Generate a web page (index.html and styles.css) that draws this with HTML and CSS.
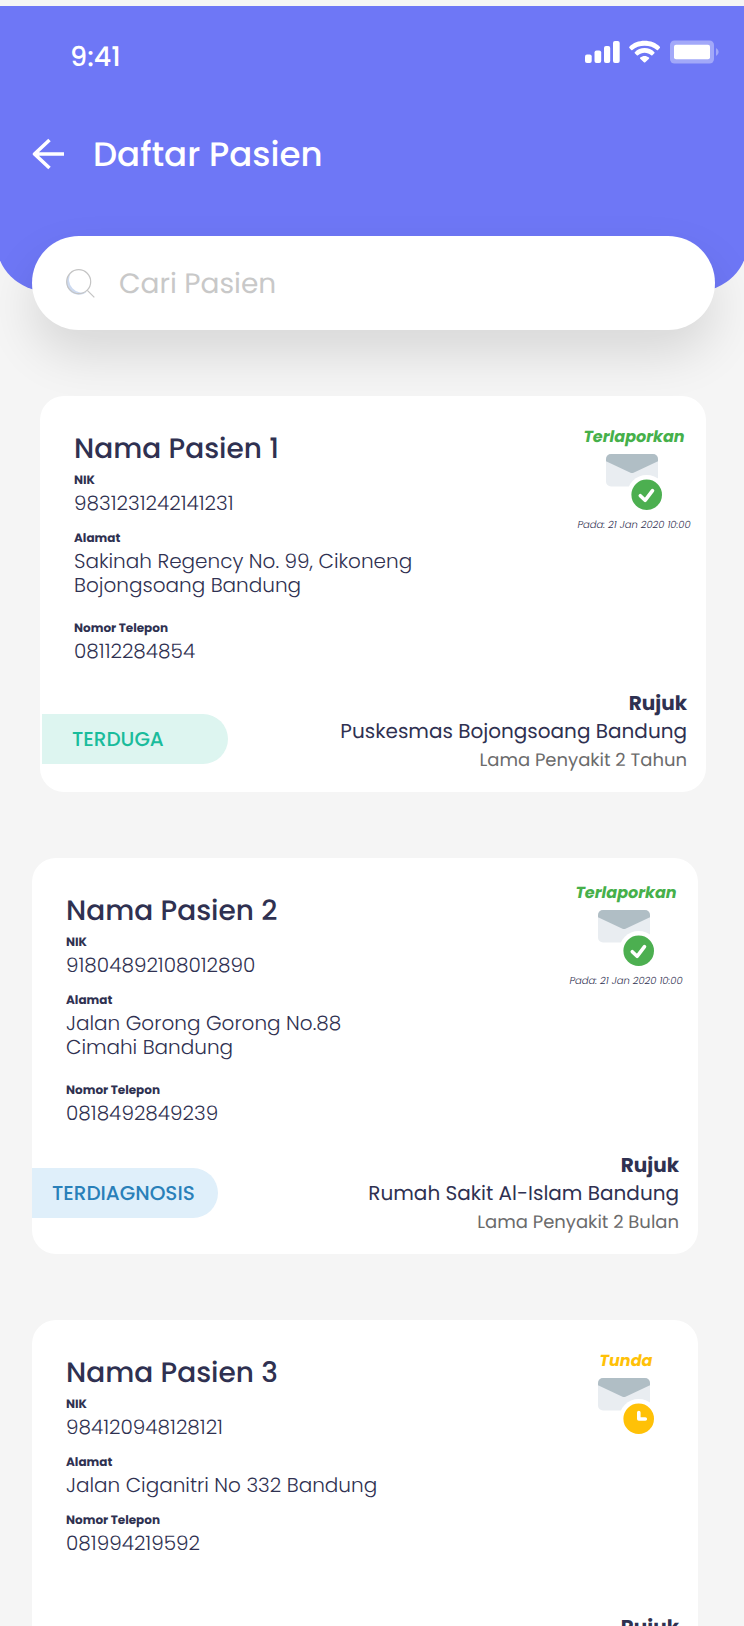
FILE: index.html
```html
<!DOCTYPE html>
<html lang="id">
<head>
<meta charset="utf-8">
<meta name="viewport" content="width=device-width, initial-scale=1">
<title>Daftar Pasien</title>
<link rel="stylesheet" href="styles.css">
</head>
<body>
<svg class="sprite" aria-hidden="true">
  <symbol id="envelope" viewBox="0 0 56 56">
    <rect width="52" height="32.500" rx="5" fill="#e9edf1"/>
    <path d="M0 7.200V5a5 5 0 0 1 5-5h42a5 5 0 0 1 5 5v2.200L27.500 18.700q-1.500.7-3 0z" fill="#b0bec5"/>
    <circle cx="40.700" cy="40.700" r="19.600" fill="#fff"/>
  </symbol>
  <symbol id="mail-sent" viewBox="0 0 56 56">
    <use href="#envelope" width="56" height="56"/>
    <circle cx="40.700" cy="40.700" r="15.300" fill="#4caf50"/>
    <path d="M34.300 41.700l4.800 4.600 7.400-9.600" fill="none" stroke="#fff" stroke-width="3.600" stroke-linecap="round" stroke-linejoin="round"/>
  </symbol>
  <symbol id="mail-pending" viewBox="0 0 56 56">
    <use href="#envelope" width="56" height="56"/>
    <circle cx="40.700" cy="40.700" r="15.300" fill="#ffc107"/>
    <path d="M40.800 34.500v6.500h6.500" fill="none" stroke="#fff" stroke-width="3.600" stroke-linecap="round" stroke-linejoin="round"/>
  </symbol>
</svg>
<div class="screen">
  <header class="header">
    <div class="statusbar">
      <span class="clock">9:41</span>
      <svg class="indicators" viewBox="0 0 135 24" aria-hidden="true">
        <g fill="#fff">
          <rect x="0" y="14.500" width="6.700" height="8.500" rx="2"/>
          <rect x="9.500" y="10.500" width="6.700" height="12.500" rx="2"/>
          <rect x="19" y="6" width="6.200" height="17" rx="2"/>
          <rect x="28" y="1" width="6.700" height="22" rx="2"/>
          <path d="M44.400 6.800C51.500-1.200 67.700-1.200 74.800 6.800q.5.600 0 1.200l-1.800 1.900q-.6.600-1.200 0C66 4.200 53.200 4.200 47.400 9.900q-.6.600-1.200 0L44.400 8q-.5-.6 0-1.200z"/>
          <path d="M49.800 12.200c5-5.600 14.600-5.600 19.600 0q.5.500 0 1.100l-2 2q-.6.500-1.200 0c-3.600-3.400-9.600-3.400-13.200 0q-.6.500-1.200 0l-2-2q-.5-.6 0-1.100z"/>
          <path d="M55.200 17.600c2.600-2.200 6.200-2.200 8.800 0q.6.500 0 1.200L60.300 22.300q-.7.600-1.400 0L55.200 18.800q-.6-.7 0-1.200z"/>
          <rect x="89" y="4.700" width="36" height="14.600" rx="2"/>
          <g fill-opacity=".36">
            <path d="M89.500.5h35a4.500 4.500 0 0 1 4.500 4.500v14a4.500 4.500 0 0 1-4.500 4.500h-35A4.500 4.500 0 0 1 85 19V5A4.500 4.500 0 0 1 89.500.5z"/>
            <path d="M131 8q2.700 1.500 2.700 4t-2.700 4z"/>
          </g>
        </g>
      </svg>
    </div>
    <div class="titlebar">
      <button class="back" type="button" aria-label="Kembali">
        <svg viewBox="0 0 32 32" aria-hidden="true"><path d="M32 16H2M17.500 2L2.500 16l15 14" fill="none" stroke="#fff" stroke-width="3.600" stroke-linejoin="round"/></svg>
      </button>
      <h1 class="title">Daftar Pasien</h1>
    </div>
  </header>

  <form class="search" role="search">
    <label class="search-icon" for="q" aria-label="Cari Pasien">
      <svg viewBox="0 0 29 29" aria-hidden="true">
        <path d="M4.500 4.500A12 12 0 0 0 21 22.500 13 13 0 0 1 4.500 4.500z" fill="#cddaf0"/>
        <circle cx="12.700" cy="12.700" r="12" fill="none" stroke="#c4c4c4" stroke-width="1.200"/>
        <path d="M21.300 21.300l7 7" stroke="#c4c4c4" stroke-width="1.200"/>
      </svg>
    </label>
    <input class="search-input" id="q" type="text" placeholder="Cari Pasien">
  </form>

  <main class="list">
    <article class="card card-active">
      <div class="card-body">
        <div class="info">
          <h2 class="name">Nama Pasien 1</h2>
          <dl class="fields">
            <div><dt>NIK</dt><dd>9831231242141231</dd></div>
            <div class="two-line"><dt>Alamat</dt><dd>Sakinah Regency No. 99, Cikoneng<br>Bojongsoang Bandung</dd></div>
            <div><dt>Nomor Telepon</dt><dd>08112284854</dd></div>
          </dl>
        </div>
        <div class="report sent">
          <strong class="report-label">Terlaporkan</strong>
          <svg class="report-icon" aria-hidden="true"><use href="#mail-sent"/></svg>
          <time class="report-date">Pada: 21 Jan 2020 10:00</time>
        </div>
      </div>
      <footer class="card-foot">
        <span class="tag suspect">TERDUGA</span>
        <div class="referral">
          <strong class="referral-title">Rujuk</strong>
          <span class="place">Puskesmas Bojongsoang Bandung</span>
          <span class="duration">Lama Penyakit 2 Tahun</span>
        </div>
      </footer>
    </article>

    <article class="card">
      <div class="card-body">
        <div class="info">
          <h2 class="name">Nama Pasien 2</h2>
          <dl class="fields">
            <div><dt>NIK</dt><dd>91804892108012890</dd></div>
            <div class="two-line"><dt>Alamat</dt><dd>Jalan Gorong Gorong No.88<br>Cimahi Bandung</dd></div>
            <div><dt>Nomor Telepon</dt><dd>0818492849239</dd></div>
          </dl>
        </div>
        <div class="report sent raised">
          <strong class="report-label">Terlaporkan</strong>
          <svg class="report-icon" aria-hidden="true"><use href="#mail-sent"/></svg>
          <time class="report-date">Pada: 21 Jan 2020 10:00</time>
        </div>
      </div>
      <footer class="card-foot">
        <span class="tag diagnosed">TERDIAGNOSIS</span>
        <div class="referral">
          <strong class="referral-title">Rujuk</strong>
          <span class="place">Rumah Sakit Al-Islam Bandung</span>
          <span class="duration">Lama Penyakit 2 Bulan</span>
        </div>
      </footer>
    </article>

    <article class="card">
      <div class="card-body">
        <div class="info">
          <h2 class="name">Nama Pasien 3</h2>
          <dl class="fields">
            <div><dt>NIK</dt><dd>984120948128121</dd></div>
            <div><dt>Alamat</dt><dd>Jalan Ciganitri No 332 Bandung</dd></div>
            <div><dt>Nomor Telepon</dt><dd>081994219592</dd></div>
          </dl>
        </div>
        <div class="report pending">
          <strong class="report-label">Tunda</strong>
          <svg class="report-icon" aria-hidden="true"><use href="#mail-pending"/></svg>
        </div>
      </div>
      <footer class="card-foot">
        <div class="referral">
          <strong class="referral-title">Rujuk</strong>
        </div>
      </footer>
    </article>
  </main>
</div>
</body>
</html>
```
FILE: styles.css
```css
* {
  box-sizing: border-box;
}

body {
  margin: 0;
  background: #f5f5f5;
  color: #2f3151;
  font-family: Poppins, Inter, "Open Sans", sans-serif;
  text-rendering: geometricPrecision;
}

h1,
h2,
dl,
dd {
  margin: 0;
}

.sprite {
  display: none;
}

.screen {
  display: flex;
  flex-direction: column;
  height: 100vh;
  padding-top: 6px;
  overflow: hidden;
}

/* Header */
.header {
  flex: none;
  min-height: 285px;
  margin: 0 -4px;
  padding: 32px 28px 0 36px;
  border-radius: 0 0 50px 50px;
  background: #6e77f6;
  color: #fff;
}

.statusbar {
  display: flex;
  justify-content: space-between;
  align-items: flex-start;
  padding-left: 38px;
}

.clock {
  font-size: 27px;
  line-height: 40px;
  font-weight: 500;
}

.indicators {
  width: 135px;
  height: 24px;
  margin-top: 2px;
}

.titlebar {
  display: flex;
  align-items: center;
  gap: 29px;
  margin-top: 51px;
}

.back {
  width: 32px;
  height: 32px;
  padding: 0;
  border: 0;
  background: none;
}

.back svg {
  display: block;
}

.title {
  font-size: 34px;
  line-height: 50px;
  font-weight: 500;
}

/* Search */
.search {
  position: relative;
  flex: none;
  display: flex;
  align-items: center;
  gap: 24px;
  height: 94px;
  margin: -55px 29px 0 32px;
  padding: 0 34px;
  border-radius: 47px;
  background: #fff;
  box-shadow: 0 24px 50px rgba(0, 0, 0, .12);
}

.search-icon svg {
  display: block;
  width: 29px;
  height: 29px;
}

.search-input {
  flex: 1;
  min-width: 0;
  padding: 2px 0 0;
  border: 0;
  outline: 0;
  background: none;
  color: #2f3151;
  font: 400 28px/40px Poppins, Inter, "Open Sans", sans-serif;
  text-rendering: geometricPrecision;
}

.search-input::placeholder {
  color: #c8c8c8;
  opacity: 1;
}

/* Patient cards */
.list {
  position: relative;
  flex: none;
  display: flex;
  flex-direction: column;
  gap: 66px;
  padding: 66px 46px 66px 32px;
}

.card {
  display: flex;
  flex-direction: column;
  min-height: 396px;
  border-radius: 24px;
  background: #fff;
}

.card-active {
  margin: 0 -8px 0 8px;
}

.card-body {
  display: flex;
  justify-content: space-between;
  padding: 29px 18px 0 34px;
}

.name {
  margin-top: 4px;
  font-size: 28px;
  line-height: 40px;
  font-weight: 500;
}

.fields {
  display: grid;
  gap: 14px;
  margin-top: 2px;
}

.two-line {
  margin-bottom: 8px;
}

dt {
  font-size: 12px;
  line-height: 20px;
  font-weight: 700;
}

dd {
  font-size: 20px;
  line-height: 24px;
  font-weight: 300;
}

.report {
  display: flex;
  flex-direction: column;
  align-items: center;
  gap: 5px;
  width: 108px;
}

.raised {
  margin-top: -6px;
}

.report-label {
  font-size: 16px;
  line-height: 24px;
  font-style: italic;
}

.sent .report-label {
  color: #46b04a;
}

.pending .report-label {
  color: #ffc107;
}

.report-icon {
  width: 56px;
  height: 56px;
}

.report-date {
  font-size: 10px;
  line-height: 20px;
  font-style: italic;
  font-weight: 300;
  white-space: nowrap;
}

.card-foot {
  display: flex;
  align-items: flex-end;
  margin-top: auto;
  padding: 0 19px 17px 0;
}

.tag {
  min-width: 186px;
  padding: 0 20px;
  border-radius: 0 25px 25px 0;
  font-size: 20px;
  line-height: 50px;
  font-weight: 500;
}

.suspect {
  margin: 0 0 11px 2px;
  padding-left: 30px;
  background: #ddf5f0;
  color: #1abc9c;
}

.diagnosed {
  margin-bottom: 19px;
  background: #dfeffa;
  color: #2980b9;
}

.referral {
  display: flex;
  flex-direction: column;
  min-height: 86px;
  margin-left: auto;
  text-align: right;
  font-size: 20px;
  line-height: 28px;
}

.duration {
  padding-top: 2px;
  color: #6b6b6b;
  font-size: 18px;
}
```
